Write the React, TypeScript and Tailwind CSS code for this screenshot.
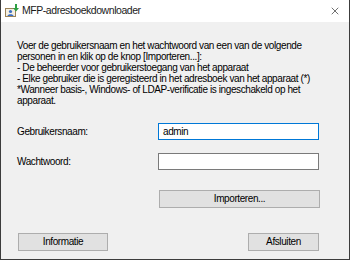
import { X } from "lucide-react";

function AppIcon() {
  return (
    <svg width="14" height="14" viewBox="0 0 14 14">
      <rect x="0.5" y="4.5" width="10" height="8" fill="#f4efe2" stroke="#9a8258" />
      <circle cx="5.5" cy="7.5" r="1.6" fill="#3b6fc4" />
      <path d="M2.5 12 C2.5 9.5 8.5 9.5 8.5 12 Z" fill="#3b6fc4" />
      <path d="M10 0 V4 H8 L11 7.5 L14 4 H12 V0 Z" fill="#2ea043" />
    </svg>
  );
}

function WinButton({ children, className }: { children: React.ReactNode; className?: string }) {
  return (
    <button
      className={`h-[18px] border border-[#adadad] bg-[#e1e1e1] text-[10px] leading-none tracking-[-0.4px] text-black ${className ?? ""}`}
    >
      {children}
    </button>
  );
}

export default function App() {
  return (
    <div
      className="flex h-[260px] w-[350px] flex-col border-x border-b border-[#3c3c3c] bg-[#f0f0f0] text-[10px] tracking-[-0.4px] text-black"
      style={{ fontFamily: '"Liberation Sans", Arial, sans-serif' }}
    >
      <div className="flex h-[22px] shrink-0 items-center bg-white pl-[4px] pr-[8px]">
        <AppIcon />
        <span className="ml-[3px] text-[10.5px] tracking-[-0.45px] text-[#1b1b1b]">MFP-adresboekdownloader</span>
        <X className="ml-auto h-[12px] w-[12px] text-[#222]" strokeWidth={1.3} />
      </div>

      <div className="flex flex-col px-[16px] pt-[18px]">
        <p className="whitespace-nowrap leading-[11px]">
          Voer de gebruikersnaam en het wachtwoord van een van de volgende
          <br />
          personen in en klik op de knop [Importeren...]:
          <br />- De beheerder voor gebruikerstoegang van het apparaat
          <br />- Elke gebruiker die is geregisteerd in het adresboek van het apparaat (*)
          <br />
          *Wanneer basis-, Windows- of LDAP-verificatie is ingeschakeld op het
          <br />
          apparaat.
        </p>

        <div className="mt-[17px] flex items-center">
          <span className="w-[141px]">Gebruikersnaam:</span>
          <div className="flex h-[17px] w-[161px] items-center border border-[#0078d7] bg-white px-[4px]">
            admin
          </div>
        </div>
        <div className="mt-[13px] flex items-center">
          <span className="w-[141px]">Wachtwoord:</span>
          <div className="h-[17px] w-[161px] border border-[#7a7a7a] bg-white" />
        </div>

        <div className="mt-[20px] flex pl-[142px]">
          <WinButton className="w-[161px]">Importeren...</WinButton>
        </div>

        <div className="mt-[25px] flex pl-[1px] pr-[14px]">
          <WinButton className="w-[90px]">Informatie</WinButton>
          <WinButton className="ml-auto w-[71px]">Afsluiten</WinButton>
        </div>
      </div>
    </div>
  );
}
